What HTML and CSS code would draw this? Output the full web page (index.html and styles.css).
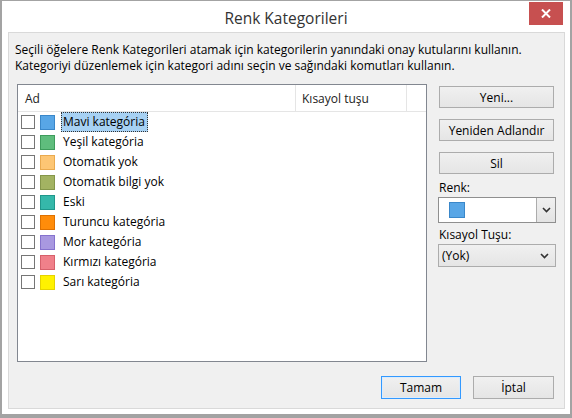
FILE: index.html
```html
<!DOCTYPE html>
<html lang="tr">
<head>
<meta charset="utf-8">
<title>Renk Kategorileri</title>
<link rel="stylesheet" href="styles.css">
</head>
<body>
<div class="window">
  <div class="titlebar">
    <span class="title">Renk Kategorileri</span>
    <div class="close">
      <svg width="10" height="9" viewBox="0 0 10 9"><path d="M1 0.5 L9 8.5 M9 0.5 L1 8.5" stroke="#fff" stroke-width="2" fill="none"/></svg>
    </div>
  </div>
  <div class="panel">
    <p class="desc">Seçili öğelere Renk Kategorileri atamak için kategorilerin yanındaki onay kutularını kullanın.<br>Kategoriyi düzenlemek için kategori adını seçin ve sağındaki komutları kullanın.</p>
    <div class="main">
      <div class="list">
        <div class="list-head">
          <div class="col col-name">Ad</div>
          <div class="col col-key">Kısayol tuşu</div>
          <div class="col col-rest"></div>
        </div>
        <div class="rows">
          <div class="row"><span class="check"></span><span class="swatch sw-blue"></span><span class="label selected">Mavi kategória</span></div>
          <div class="row"><span class="check"></span><span class="swatch sw-green"></span><span class="label">Yeşil kategória</span></div>
          <div class="row"><span class="check"></span><span class="swatch sw-peach"></span><span class="label">Otomatik yok</span></div>
          <div class="row"><span class="check"></span><span class="swatch sw-olive"></span><span class="label">Otomatik bilgi yok</span></div>
          <div class="row"><span class="check"></span><span class="swatch sw-teal"></span><span class="label">Eski</span></div>
          <div class="row"><span class="check"></span><span class="swatch sw-orange"></span><span class="label">Turuncu kategória</span></div>
          <div class="row"><span class="check"></span><span class="swatch sw-purple"></span><span class="label">Mor kategória</span></div>
          <div class="row"><span class="check"></span><span class="swatch sw-red"></span><span class="label">Kırmızı kategória</span></div>
          <div class="row"><span class="check"></span><span class="swatch sw-yellow"></span><span class="label">Sarı kategória</span></div>
        </div>
      </div>
      <div class="side">
        <div class="btn-stack">
          <button class="btn">Yeni...</button>
          <button class="btn">Yeniden Adlandır</button>
          <button class="btn">Sil</button>
        </div>
        <div class="field-label label-renk">Renk:</div>
        <div class="combo color-combo">
          <span class="combo-value"><span class="swatch sw-blue"></span></span>
          <span class="combo-arrow"><svg width="9" height="6" viewBox="0 0 9 6"><path d="M1 1 L4.5 4.5 L8 1" stroke="#333" stroke-width="1.6" fill="none"/></svg></span>
        </div>
        <div class="field-label label-key">Kısayol Tuşu:</div>
        <div class="combo key-combo">
          <span class="combo-text">(Yok)</span>
          <svg width="9" height="6" viewBox="0 0 9 6"><path d="M1 1 L4.5 4.5 L8 1" stroke="#333" stroke-width="1.6" fill="none"/></svg>
        </div>
      </div>
    </div>
    <div class="footer">
      <button class="btn btn-default">Tamam</button>
      <button class="btn btn-cancel">İptal</button>
    </div>
  </div>
</div>
</body>
</html>
```
FILE: styles.css
```css
* { box-sizing: border-box; }
html, body { margin: 0; padding: 0; }
body {
  background: #a3a3a3;
  width: 572px;
  height: 418px;
  overflow: hidden;
  font-family: "Open Sans", "Noto Sans", sans-serif;
  font-size: 12px;
  color: #000;
}
.window {
  margin: 1px 2px 0 2px;
  width: 568px;
  height: 413px;
  background: #fff;
  display: flex;
  flex-direction: column;
}
.titlebar {
  position: relative;
  height: 31px;
  flex: none;
  text-align: center;
}
.title {
  display: inline-block;
  font-size: 15.5px;
  line-height: 20px;
  padding-top: 7px;
  color: #333;
}
.close {
  position: absolute;
  left: 527px;
  top: 1px;
  width: 34px;
  height: 23px;
  background: #c75050;
  display: flex;
  align-items: center;
  justify-content: center;
}
.panel {
  flex: 1;
  margin: 0 5px 5px 6px;
  border: 1px solid #d9d9d9;
  background: #f0f0f0;
  display: flex;
  flex-direction: column;
}
.desc {
  margin: 0;
  padding: 9px 0 0 6px;
  line-height: 16px;
  white-space: nowrap;
}
.main {
  display: flex;
  margin-top: 10px;
  padding-left: 8px;
  gap: 11px;
}
.list {
  width: 410px;
  height: 278px;
  background: #fff;
  border: 1px solid #828790;
  display: flex;
  flex-direction: column;
}
.list-head {
  display: flex;
  height: 27px;
  border-bottom: 1px solid #e5e5e5;
  flex: none;
}
.col {
  height: 100%;
  line-height: 28px;
  padding-left: 7px;
  color: #222;
}
.col-name { width: 278px; border-right: 1px solid #e5e5e5; }
.col-key { width: 111px; padding-left: 6px; border-right: 1px solid #e5e5e5; }
.col-rest { flex: 1; }
.rows { display: flex; flex-direction: column; }
.row {
  height: 20px;
  display: flex;
  align-items: center;
  padding-left: 3px;
}
.check {
  width: 14px;
  height: 14px;
  border: 1px solid #767676;
  background: #fff;
  margin-right: 5px;
  flex: none;
}
.swatch {
  width: 15px;
  height: 15px;
  border: 1px solid;
  flex: none;
  margin-right: 6px;
}
.sw-blue { background: #58a6e6; border-color: #3a87c9; }
.sw-green { background: #5fbd7d; border-color: #3e9c5c; }
.sw-peach { background: #fdc674; border-color: #e9aa4f; }
.sw-olive { background: #a3b362; border-color: #85964a; }
.sw-teal { background: #35b8aa; border-color: #1f978b; }
.sw-orange { background: #ff8c0a; border-color: #de7100; }
.sw-purple { background: #a898e0; border-color: #8572cd; }
.sw-red { background: #f0808a; border-color: #d6606b; }
.sw-yellow { background: #fff200; border-color: #e5d300; }
.label {
  height: 20px;
  line-height: 18px;
  padding: 0 2px 0 1px;
  border: 1px solid transparent;
  color: #000;
}
.label.selected {
  background: #a7d1f3;
  border: 1px dotted #333;
}
.side {
  width: 118px;
  display: flex;
  flex-direction: column;
}
.btn-stack {
  display: flex;
  flex-direction: column;
  gap: 11px;
  margin-top: 2px;
  padding-left: 1px;
}
.btn {
  font-family: inherit;
  font-size: 12px;
  color: #000;
  height: 22px;
  padding: 0;
  border: 1px solid #acacac;
  background: linear-gradient(#f0f0f0, #e5e5e5);
  text-align: center;
  line-height: 19px;
}
.btn-stack .btn { width: 115px; }
.field-label {
  line-height: 16px;
  color: #000;
  padding-left: 1px;
}
.label-renk { margin-top: 6px; }
.label-key { margin-top: 4px; }
.combo {
  width: 118px;
  display: flex;
  align-items: center;
  margin-top: 1px;
}
.color-combo {
  height: 26px;
  border: 1px solid #8f8f8f;
  background: #fff;
}
.combo-value {
  flex: 1;
  padding-left: 10px;
  display: flex;
  align-items: center;
}
.combo-value .swatch { width: 16px; height: 16px; }
.combo-arrow {
  width: 19px;
  height: 100%;
  border-left: 1px solid #acacac;
  background: linear-gradient(#f0f0f0, #e3e3e3);
  display: flex;
  align-items: center;
  justify-content: center;
}
.key-combo {
  height: 23px;
  border: 1px solid #acacac;
  background: linear-gradient(#f0f0f0, #e5e5e5);
  justify-content: space-between;
  padding: 0 6px 0 3px;
}
.combo-text { line-height: 20px; }
.footer {
  display: flex;
  justify-content: flex-end;
  gap: 12px;
  margin-top: 14px;
  padding-right: 10px;
}
.footer .btn { height: 23px; line-height: 20px; }
.btn-default {
  width: 80px;
  border-color: #3399ff;
  box-shadow: inset 0 0 0 1px #dcecfc;
}
.btn-cancel { width: 81px; }
```
